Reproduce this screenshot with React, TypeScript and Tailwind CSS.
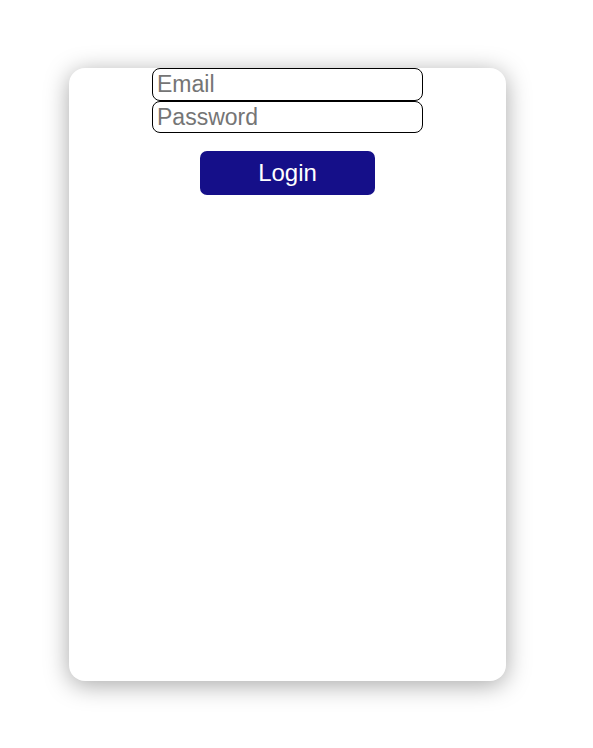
export default function App() {
  return (
    <div className="min-h-screen bg-white pt-[68px] pl-[69px]" style={{ fontFamily: '"Liberation Sans", Arial, sans-serif' }}>
      <div className="w-[437px] h-[613px] rounded-[16px] bg-white shadow-[0_4px_24px_rgba(0,0,0,0.35)] flex flex-col items-center">
        <input
          type="email"
          placeholder="Email"
          className="w-[271px] h-[33px] border border-black rounded-[8px] px-[4px] text-[23px] placeholder:text-[#757575] outline-none"
        />
        <input
          type="password"
          placeholder="Password"
          className="w-[271px] h-[32px] border border-black rounded-[8px] px-[4px] text-[23px] placeholder:text-[#757575] outline-none"
        />
        <button className="mt-[18px] w-[175px] h-[44px] rounded-[7px] bg-[#150f89] text-white text-[24px]">
          Login
        </button>
      </div>
    </div>
  );
}
